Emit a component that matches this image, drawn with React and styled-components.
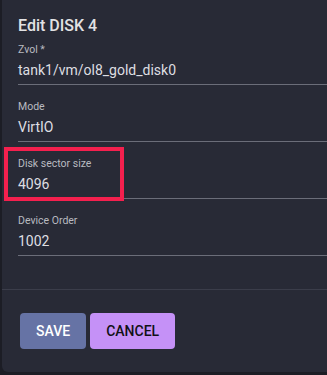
import React from "react";
import styled, { createGlobalStyle } from "styled-components";

const GlobalStyle = createGlobalStyle`
  html, body {
    margin: 0;
    padding: 0;
    background: #1c1d25;
    overflow: hidden;
    font-family: Roboto, "Liberation Sans", sans-serif;
  }
`;

const Card = styled.div`
  margin-left: 2px;
  width: calc(100% - 2px);
  background: #282a36;
  border-radius: 0 0 0 6px;
`;

const Content = styled.div`
  padding: 0 0 33px 16px;
`;

const Title = styled.h2`
  margin: 0;
  padding-top: 14px;
  font-size: 16px;
  line-height: 24px;
  font-weight: 500;
  color: #e2e2e4;
`;

const Fields = styled.div`
  display: flex;
  flex-direction: column;

  & > :first-child {
    padding-top: 6px;
  }
`;

const Field = styled.div`
  position: relative;
  display: flex;
  flex-direction: column;
  gap: 4px;
  padding: 16px 0 4px;
  border-bottom: 1px solid #6b6d79;
`;

const Label = styled.label`
  font-size: 10.5px;
  line-height: 12px;
  color: #b9bac0;
`;

const Value = styled.div`
  font-size: 14px;
  line-height: 20px;
  color: #dedee2;
`;

const Highlight = styled.div`
  position: absolute;
  left: -14px;
  top: 5px;
  width: 112px;
  height: 46px;
  border: 4px solid #f4204e;
  z-index: 1;
`;

const Divider = styled.hr`
  margin: 0;
  border: 0;
  border-top: 1px solid #3b3d4a;
`;

const Actions = styled.div`
  display: flex;
  gap: 4px;
  padding: 23px 0 23px 18px;
`;

const Button = styled.button`
  height: 36px;
  padding: 0 16px;
  border: 0;
  border-radius: 4px;
  font-family: Roboto, "Liberation Sans", sans-serif;
  font-size: 14px;
  font-weight: 500;
  letter-spacing: 0;
  text-transform: uppercase;
  background: ${({ variant }) => (variant === "primary" ? "#6673a5" : "#c591f7")};
  color: ${({ variant }) => (variant === "primary" ? "#ffffff" : "#111116")};
`;

const fields = [
  { label: "Zvol *", value: "tank1/vm/ol8_gold_disk0" },
  { label: "Mode", value: "VirtIO" },
  { label: "Disk sector size", value: "4096", highlighted: true },
  { label: "Device Order", value: "1002" },
];

export default function App() {
  return (
    <>
      <GlobalStyle />
      <Card>
        <Content>
          <Title>Edit DISK 4</Title>
          <Fields>
            {fields.map((f) => (
              <Field key={f.label}>
                {f.highlighted && <Highlight />}
                <Label>{f.label}</Label>
                <Value>{f.value}</Value>
              </Field>
            ))}
          </Fields>
        </Content>
        <Divider />
        <Actions>
          <Button variant="primary">Save</Button>
          <Button>Cancel</Button>
        </Actions>
      </Card>
    </>
  );
}
